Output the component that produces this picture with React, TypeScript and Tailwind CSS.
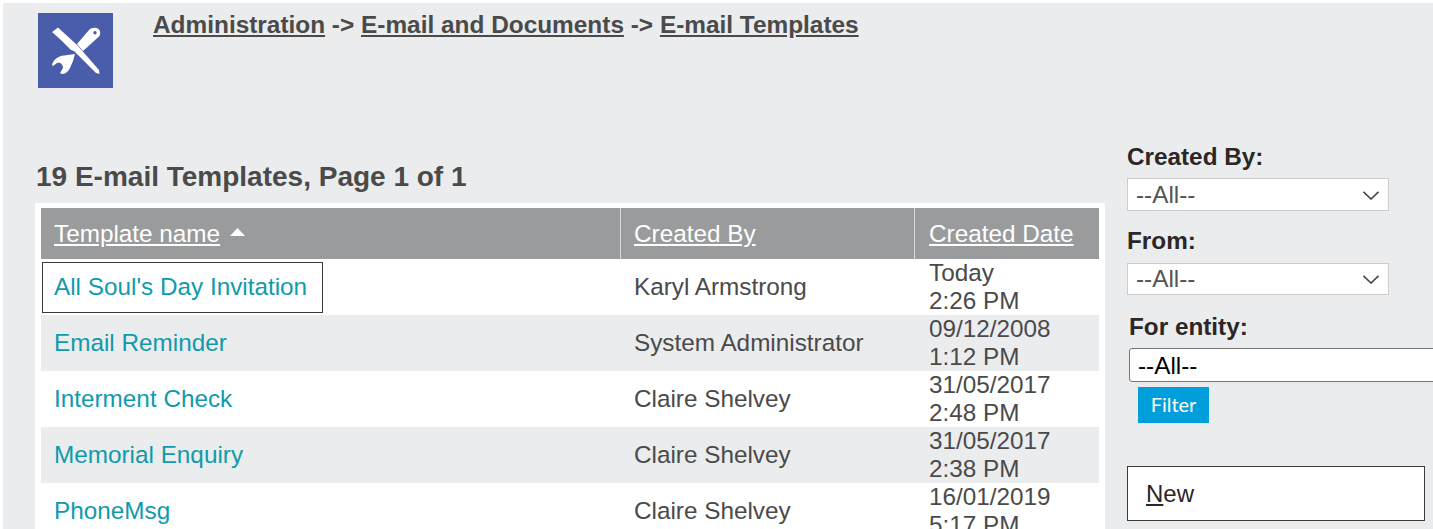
const ROWS = [
  { name: "All Soul's Day Invitation", by: "Karyl Armstrong", date: "Today", time: "2:26 PM" },
  { name: "Email Reminder", by: "System Administrator", date: "09/12/2008", time: "1:12 PM" },
  { name: "Interment Check", by: "Claire Shelvey", date: "31/05/2017", time: "2:48 PM" },
  { name: "Memorial Enquiry", by: "Claire Shelvey", date: "31/05/2017", time: "2:38 PM" },
  { name: "PhoneMsg", by: "Claire Shelvey", date: "16/01/2019", time: "5:17 PM" },
];

function ToolsIcon() {
  return (
    <div className="h-[75px] w-[75px] shrink-0 bg-[#4a5dab]">
      <svg width="75" height="75" viewBox="0 0 75 75" fill="#fff">
        {/* wrench handle */}
        <path d="M39 31 L51 17 C53.5 14.5 58 14 60.5 16 C63 18.5 62.5 22 60.5 24 L45 38 Z" />
        <circle cx="57" cy="19.7" r="1.7" fill="#4a5dab" />
        {/* wrench head */}
        <path d="M14 52 C15 47 20 43 26 42.5 L37 41 L35 48 L32 55 C30 59 27 61 24 61 L22 60 L25 55 C25 51 22 49 19 50 L15 53 Z" />
        {/* screwdriver */}
        <path d="M36 36 L61 62" stroke="#4a5dab" strokeWidth="6" />
        <path d="M14 19 L20 14.5 L38 31 L40 33 L61 57 L61.5 61 L58 60 L36 38 L33 37 L24 28 Z" />
      </svg>
    </div>
  );
}

function FilterSelect({ label, boxClass }: { label: string; boxClass: string }) {
  return (
    <div>
      <div className="text-[24.3px] leading-[26px] font-bold text-[#2d2626]">{label}</div>
      <div
        className={`flex w-[262px] items-center justify-between border border-[#cccccc] bg-white pr-[9px] pl-[8px] text-[24.3px] text-[#555555] ${boxClass}`}
      >
        <span>--All--</span>
        <svg width="16" height="9" viewBox="0 0 16 9" fill="none" stroke="#444" strokeWidth="1.6">
          <path d="M0.5 0.8 L8 8 L15.5 0.8" />
        </svg>
      </div>
    </div>
  );
}

export default function App() {
  return (
    <div className="h-[529px] w-[1433px] overflow-hidden bg-white pt-[3px] pl-[3px] font-['Liberation_Sans',Arial,sans-serif]">
      <div className="flex h-full w-full overflow-hidden bg-[#ebecee]">
        <div className="w-[1102px] shrink-0 pl-[32px]">
          <div className="flex pt-[10px] pl-[3px]">
            <ToolsIcon />
            <div className="pl-[40px] text-[24.4px] leading-[24px] font-bold text-[#4a4a4a]">
              <a className="underline">Administration</a>
              <span> -&gt; </span>
              <a className="underline">E-mail and Documents</a>
              <span> -&gt; </span>
              <a className="underline">E-mail Templates</a>
            </div>
          </div>
          <h1 className="mt-[73px] pl-[1px] text-[28px] leading-[32px] font-bold text-[#4a4a4a]">
            19 E-mail Templates, Page 1 of 1
          </h1>
          <div className="mt-[10px] w-[1070px] bg-white px-[6px] pt-[5px]">
            <div className="flex h-[51px] w-[1058px] items-center bg-[#9a9b9d] pt-[2px] text-[24.3px] text-white">
              <div className="flex h-full w-[579px] items-center gap-[10px] pl-[13px]">
                <a className="underline">Template name</a>
                <svg width="15" height="8" viewBox="0 0 15 8" fill="#fff" className="mb-[6px]">
                  <path d="M7.5 0 L15 8 L0 8 Z" />
                </svg>
              </div>
              <div className="-mt-[2px] flex h-[51px] w-[294px] items-center border-l border-[#d9d9d9] pt-[2px] pl-[13px]">
                <a className="underline">Created By</a>
              </div>
              <div className="-mt-[2px] flex h-[51px] flex-1 items-center border-l border-[#d9d9d9] pt-[2px] pl-[14px]">
                <a className="underline">Created Date</a>
              </div>
            </div>
            {ROWS.map((row, i) => (
              <div
                key={row.name}
                className={`flex h-[56px] w-[1058px] items-center text-[24.3px] text-[#4a4a4a] ${
                  i % 2 === 1 ? "bg-[#ebecee]" : "bg-white"
                }`}
              >
                <div className="w-[579px] pl-[1px]">
                  <a
                    className={`block h-[51px] w-fit border pr-[15px] pl-[11px] leading-[47px] text-[#0f9bab] ${
                      i === 0 ? "border-[#3a3a3a]" : "border-transparent"
                    }`}
                  >
                    {row.name}
                  </a>
                </div>
                <div className="w-[294px] pl-[14px]">{row.by}</div>
                <div className="flex-1 pl-[15px] leading-[28px]">
                  <div>{row.date}</div>
                  <div>{row.time}</div>
                </div>
              </div>
            ))}
          </div>
        </div>
        <div className="min-w-0 flex-1 pt-[141px] pl-[22px]">
          <FilterSelect label="Created By:" boxClass="mt-[8px] h-[33px] pt-[2px]" />
          <div className="mt-[17px]">
            <FilterSelect label="From:" boxClass="mt-[9px] h-[32px]" />
          </div>
          <div className="mt-[19px] pl-[2px]">
            <div className="text-[24.3px] leading-[26px] font-bold text-[#2d2626]">For entity:</div>
            <div className="mt-[8px] flex h-[34px] w-[320px] items-center rounded-[3px] border border-[#767676] bg-white pt-[2px] pl-[8px] text-[24.3px] text-black">
              --All--
            </div>
            <button className="mt-[5px] ml-[9px] block h-[36px] w-[71px] bg-[#009fdb] pb-[2px] text-center text-[20px] text-white font-['Lato',sans-serif]">
              Filter
            </button>
          </div>
          <div className="mt-[43px] flex h-[55px] w-[298px] items-center border border-[#3a3a3a] bg-white pl-[18px] text-[24px] text-[#2d2626]">
            <span>
              <span className="underline">N</span>ew
            </span>
          </div>
        </div>
      </div>
    </div>
  );
}
